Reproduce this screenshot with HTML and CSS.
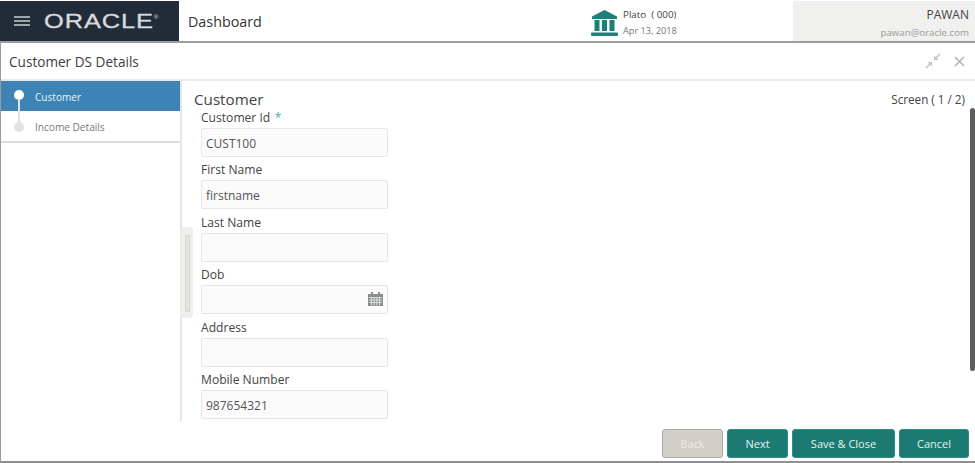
FILE: index.html
```html
<!DOCTYPE html>
<html lang="en">
<head>
<meta charset="utf-8">
<title>Customer DS Details</title>
<link rel="stylesheet" href="styles.css">
</head>
<body>
<div class="app">
  <header class="topbar">
    <div class="brand">
      <svg class="burger" width="16" height="10" viewBox="0 0 16 10"><path d="M0 1h16M0 5h16M0 9h16" stroke="#c9ccd0" stroke-width="1.4"/></svg>
      <span class="logo">ORACLE<sup class="reg">®</sup></span>
    </div>
    <div class="page-title">Dashboard</div>
    <div class="entity">
      <svg class="bank" width="27" height="26" viewBox="0 0 27 26"><path d="M13.500 0 26 6.500V9H1V6.500Z" fill="#1f7f78"/><path d="M3.500 10h5v11h-5zM11 10h5v11h-5zM18.500 10h5v11h-5z" fill="#1f7f78"/><rect x="0" y="22.500" width="27" height="3.500" rx="1" fill="#1f7f78"/></svg>
      <div class="entity-text">
        <div class="entity-name">Plato &nbsp;( 000)</div>
        <div class="entity-date">Apr 13, 2018</div>
      </div>
    </div>
    <div class="user">
      <div class="user-name">PAWAN</div>
      <div class="user-mail">pawan@oracle.com</div>
    </div>
  </header>
  <div class="titlebar">
    <h1 class="title">Customer DS Details</h1>
    <div class="window-actions">
      <svg width="16" height="16" viewBox="0 0 16 16"><path d="M15 1 10.500 5.500M1 15l4.500-4.500" stroke="#c4c6c6" stroke-width="1.600"/><path d="M9 2.500V7h4.500ZM7 13.500V9H2.500Z" fill="#c4c6c6"/></svg>
      <svg width="11" height="11" viewBox="0 0 11 11"><path d="M1 1l9 9M10 1l-9 9" stroke="#b4b7b7" stroke-width="1.700"/></svg>
    </div>
  </div>
  <div class="main">
    <nav class="steps">
      <div class="step step-active"><span class="dot"></span><span>Customer</span></div>
      <div class="step"><span class="dot"></span><span>Income Details</span></div>
    </nav>
    <div class="handle"><span class="handle-grip"></span></div>
    <section class="content">
      <div class="content-head">
        <h2 class="section-title">Customer</h2>
        <div class="screen-count">Screen ( 1 / 2)</div>
      </div>
      <form class="form">
        <div class="field"><label class="label">Customer Id <span class="req">*</span></label><div class="input">CUST100</div></div>
        <div class="field"><label class="label">First Name</label><div class="input">firstname</div></div>
        <div class="field"><label class="label">Last Name</label><div class="input"></div></div>
        <div class="field"><label class="label">Dob</label><div class="input">
          <svg class="cal" width="15" height="14" viewBox="0 0 15 14"><path d="M0 2h15v12H0z" fill="#8b8e8e"/><path d="M3 0h2v3H3zM10 0h2v3h-2z" fill="#8b8e8e"/><path d="M1 5.500h13M1 8h13M1 10.500h13M3.500 5v8.500M6.200 5v8.500M8.800 5v8.500M11.500 5v8.500" stroke="#eef0f0" stroke-width=".8"/></svg>
        </div></div>
        <div class="field"><label class="label">Address</label><div class="input"></div></div>
        <div class="field"><label class="label">Mobile Number</label><div class="input">987654321</div></div>
      </form>
    </section>
    <div class="scrollbar"></div>
  </div>
  <footer class="actions">
    <button class="btn btn-off" type="button">Back</button>
    <button class="btn btn-next" type="button">Next</button>
    <button class="btn btn-save" type="button">Save &amp; Close</button>
    <button class="btn btn-cancel" type="button">Cancel</button>
  </footer>
</div>
</body>
</html>
```
FILE: styles.css
```css
* { box-sizing: border-box; }
html, body { margin: 0; height: 100%; background: #fff; overflow: hidden; }
body { font-family: "Open Sans", "Noto Sans", sans-serif; color: #444; }
.app { height: 463px; display: flex; flex-direction: column; border-left: 1px solid #9a9a9a; border-bottom: 2px solid #8f8f8f; position: relative; }
.topbar { height: 43px; flex: none; padding-top: 1px; display: flex; border-bottom: 2px solid #9c9c9c; margin-left: -1px; background: #fff; }
.brand { width: 179px; background: #222b38; display: flex; align-items: center; padding-left: 14px; }
.burger { flex: none; }
.logo { margin-left: 14px; color: #d9dbde; font-family: "Liberation Sans", sans-serif; font-size: 20px; line-height: 24px; letter-spacing: .7px; transform: scaleX(1.27); transform-origin: left center; -webkit-text-stroke: .3px #d9dbde; white-space: nowrap; }
.reg { font-size: 5px; letter-spacing: 0; vertical-align: 9px; line-height: 0; -webkit-text-stroke: 0; }
.page-title { width: 411px; padding-left: 9px; font-size: 14.300px; line-height: 41px; color: #333; }
.entity { width: 203px; display: flex; align-items: flex-start; padding: 7px 0 0 1px; }
.bank { flex: none; margin-top: 2px; }
.entity-text { margin-left: 5px; }
.entity-name { font-size: 9.800px; line-height: 14px; color: #444; }
.entity-date { font-size: 9.200px; line-height: 14px; color: #777; margin-top: 2px; }
.user { flex: 1; background: #f0f0ef; text-align: right; padding: 5px 6px 0 0; }
.user-name { font-size: 12px; line-height: 18px; color: #444; }
.user-mail { font-size: 9.700px; line-height: 15px; color: #9a9a9a; margin-top: 1px; }
.titlebar { height: 38px; flex: none; display: flex; align-items: center; justify-content: space-between; padding: 0 10px 0 8px; border-bottom: 2px solid #e9e9e9; }
.title { margin: 0; font-size: 13.600px; font-weight: 400; color: #3d3d3d; }
.window-actions { display: flex; align-items: center; gap: 13px; }
.main { flex: 1; min-height: 0; display: flex; position: relative; }
.steps { width: 179px; flex: none; }
.step { height: 30px; display: flex; align-items: center; gap: 11px; padding-left: 13px; padding-top: 1px; font-size: 10.100px; color: #777; position: relative; }
.step:last-child { border-bottom: 2px solid #dcdcdc; height: 32px; }
.step-active { background: #3d83b5; color: #e8f2f6; }
.dot { width: 10px; height: 10px; border-radius: 50%; background: #e2e4e4; flex: none; }
.step-active .dot { background: #fff; margin-top: -3px; }
.step-active .dot::after { content: ""; position: absolute; left: 17px; top: 18px; width: 2px; height: 24px; background: #dfe3e4; }
.handle { width: 12px; height: 91px; background: #eeeeec; border-radius: 0 4px 4px 0; display: flex; justify-content: center; padding: 8px 0 6px; position: absolute; left: 180px; top: 146px; }
.handle-grip { width: 5px; background: #e2e2df; border: 1px solid #d6d6d2; }
.content { flex: 1; min-width: 0; height: 340px; border-left: 2px solid #e6e6e6; padding: 8px 10px 0 12px; overflow: hidden; }
.content-head { display: flex; justify-content: space-between; }
.section-title { margin: 0; font-size: 15.200px; line-height: 20px; font-weight: 400; color: #444; }
.screen-count { font-size: 11.700px; line-height: 17px; color: #444; margin-top: 2px; }
.form { width: 187px; margin: -.6px 0 0 7px; }
.field { height: 52.600px; }
.label { display: block; font-size: 12.100px; line-height: 18px; color: #444; }
.req { color: #5aa9b3; font-size: 13px; margin-left: 1px; }
.input { height: 29px; margin-top: 1px; background: #fbfbfc; border: 1px solid #e6e6e6; border-radius: 2px; padding-left: 4px; font-size: 12px; line-height: 29px; color: #555; position: relative; }
.cal { position: absolute; right: 4px; top: 6px; }
.scrollbar { position: absolute; right: 0; top: 27px; width: 5px; height: 263px; background: #5c5c5c; border-radius: 3px; }
.actions { flex: none; height: 40px; display: flex; justify-content: flex-end; gap: 4px; padding: 0 6px 3px 0; align-items: flex-end; }
.btn { height: 29px; border: 1px solid #2b8d85; border-radius: 3px; background: #1d7a73; color: #e6f1f0; font-family: inherit; font-size: 11px; padding: 0; }
.btn-off { width: 61px; background: #d2cfc8; border-color: #a9a7a2; color: #eeece8; }
.btn-next { width: 61px; }
.btn-save { width: 103px; }
.btn-cancel { width: 70px; }
```
